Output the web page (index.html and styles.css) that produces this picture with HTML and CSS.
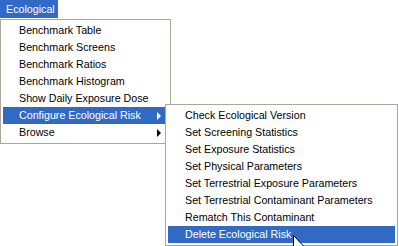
FILE: index.html
```html
<!DOCTYPE html>
<html lang="en">
<head>
    <meta charset="UTF-8">
    <title>Ecological menu</title>
    <link rel="stylesheet" href="styles.css">
</head>
<body>
    <div class="menubar">
        <span class="menubar-item open">Ecological</span>
    </div>

    <ul class="menu main-menu">
        <li>Benchmark Table</li>
        <li>Benchmark Screens</li>
        <li>Benchmark Ratios</li>
        <li>Benchmark Histogram</li>
        <li>Show Daily Exposure Dose</li>
        <li class="has-sub active">Configure Ecological Risk<span class="arrow"></span>
            <ul class="menu sub-menu">
                <li>Check Ecological Version</li>
                <li>Set Screening Statistics</li>
                <li>Set Exposure Statistics</li>
                <li>Set Physical Parameters</li>
                <li>Set Terrestrial Exposure Parameters</li>
                <li>Set Terrestrial Contaminant Parameters</li>
                <li>Rematch This Contaminant</li>
                <li class="active">Delete Ecological Risk
                    <!-- pointeur de la souris -->
                    <svg class="cursor" width="12" height="20" viewBox="0 0 12 20">
                        <path d="M0.5 0.5 L0.5 15.5 L4 12 L6.5 17.5 L8.5 16.5 L6 11.5 L11 11.5 Z" fill="#fff" stroke="#000" stroke-width="1"/>
                    </svg>
                </li>
            </ul>
        </li>
        <li class="has-sub">Browse<span class="arrow"></span></li>
    </ul>
</body>
</html>
```

FILE: styles.css
```css
body {
    margin: 0;
    background: #ffffff;
    font-family: "Liberation Sans", Arial, sans-serif;
    font-size: 10.7px;
    color: #000000;
    width: 399px;
    height: 246px;
    overflow: hidden;
}
.menubar {
    height: 19px;
}
.menubar-item {
    display: inline-block;
    height: 18px;
    line-height: 18px;
    padding: 0 6px;
    width: 46px;
}
.menubar-item.open {
    background-color: #316ac5;
    color: #ffffff;
}
.menu {
    list-style: none;
    margin: 0;
    padding: 2px;
    background: #ffffff;
    border: 1px solid #aca899;
}
.menu li {
    height: 17px;
    line-height: 17px;
    padding-left: 16px;
    white-space: nowrap;
    position: relative;
}
.menu li.active {
    background-color: #316ac5;
    color: #ffffff;
}
.main-menu {
    width: 165px;
}
.sub-menu {
    position: absolute;
    left: 162px;
    top: -3px;
    width: 227px;
    color: #000000;
    z-index: 2;
}
.sub-menu li {
    padding-left: 17px;
}
.arrow {
    position: absolute;
    right: 7px;
    top: 5px;
    width: 0;
    height: 0;
    border-top: 4px solid transparent;
    border-bottom: 4px solid transparent;
    border-left: 4px solid #000000;
}
.active > .arrow {
    border-left-color: #ffffff;
}
.cursor {
    position: absolute;
    left: 125px;
    top: 9px;
}
```
